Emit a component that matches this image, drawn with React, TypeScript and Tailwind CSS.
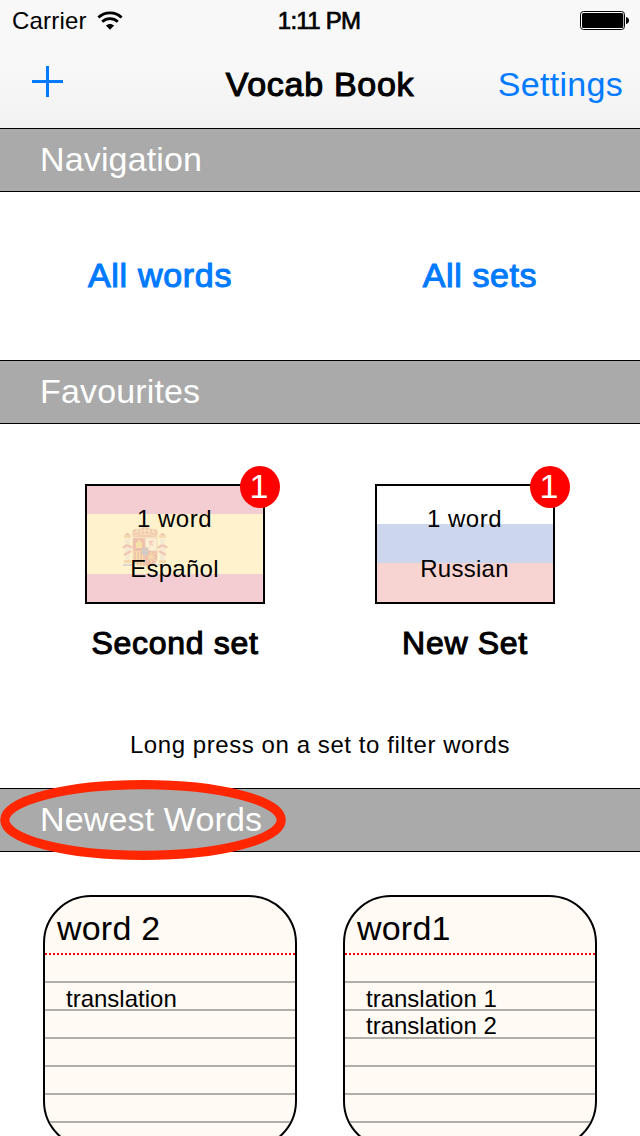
import type { ReactNode } from "react";

function WifiIcon() {
  return (
    <svg width="26" height="20" viewBox="0 0 26 20" fill="none" stroke="black">
      <path d="M1.4 6.5C7.8 0.3 18.2 0.3 24.6 6.5" strokeWidth="2.9" />
      <path d="M5.2 10.7C9.6 6.6 16.4 6.6 20.8 10.7" strokeWidth="2.9" />
      <path d="M8.9 14.6C11.2 12.3 14.8 12.3 17.1 14.6L13 18.8Z" fill="black" stroke="none" />
    </svg>
  );
}

function BatteryIcon() {
  return (
    <svg width="49" height="19" viewBox="0 0 49 19">
      <rect x="0.5" y="0.5" width="44" height="18" rx="3" fill="#fff" stroke="#000" />
      <rect x="2" y="2" width="41.3" height="15" rx="1.6" fill="#000" />
      <path d="M46 6C48 6.5 49 7.7 49 9.5C49 11.3 48 12.5 46 13Z" fill="#000" />
    </svg>
  );
}

function CoatOfArms() {
  return (
    <svg width="46" height="42" viewBox="0 0 46 42" className="opacity-20">
      <path d="M11 11L10 5Q13 2 18 3Q22 0 23 1Q24 0 28 3Q33 2 36 5L35 11Z" fill="#c03040" />
      <path d="M11 7Q23 2 35 7M12 10Q23 7 34 10" stroke="#d8a060" strokeWidth="1.2" fill="none" />
      <path d="M15 3V7M19 3V8M23 0V8M27 3V8M31 3V7" stroke="#e8c8a0" strokeWidth="1" fill="none" />
      <path d="M11 12H23V25H11Z" fill="#b40030" />
      <path d="M23 12H35V25H23Z" fill="#f2e6f2" />
      <path d="M11 25H23V40Q11 40 11 32Z" fill="#dba020" />
      <path d="M23 25H35V32Q35 40 23 40Z" fill="#b40030" />
      <path d="M13 26V36M16 26V38M19 26V39M22 26V39" stroke="#b40030" strokeWidth="1.6" />
      <path d="M14 22V16H16V14H18V16H20V22Z" fill="#c9a520" />
      <path d="M26 16L29 14L32 15L30 17L32 20L29 19L27 23L28 18Z" fill="#d04a80" />
      <path d="M25 27L33 35M33 27L25 35M25 31H33M29 26V37" stroke="#d0a526" strokeWidth="1" />
      <ellipse cx="23" cy="25.5" rx="3.5" ry="4.2" fill="#0040d0" stroke="#b40030" />
      <path d="M11 12H35V32Q35 40 23 40Q11 40 11 32ZM23 12V40M11 25H35" stroke="#904060" strokeWidth="0.7" fill="none" />
      <path d="M3 13H8V34H3ZM38 13H43V34H38Z" fill="#d0cce8" />
      <path d="M2 9H9V12H2ZM37 9H44V12H37ZM2 34H9V37H2ZM37 34H44V37H37Z" fill="#c87840" />
      <path d="M3 9Q5.5 5 8 9ZM38 9Q40.5 5 43 9Z" fill="#b40030" />
      <path d="M1 39H10M36 39H45" stroke="#5070d0" strokeWidth="2" />
      <path d="M1 22Q5 17 10 22M2 29L9 25M45 22Q41 17 36 22M44 29L37 25" stroke="#c02050" strokeWidth="2.4" fill="none" />
    </svg>
  );
}

function SectionBar({ children }: { children: ReactNode }) {
  return (
    <h2 className="relative h-16 border-y border-black bg-[#aaaaaa] pl-10 text-[34px] leading-[61px] tracking-[0.15px] text-white">
      {children}
    </h2>
  );
}

type SetTileProps = { flag: ReactNode; language: string; name: string };

function SetTile({ flag, language, name }: SetTileProps) {
  return (
    <div className="flex w-[180px] flex-col items-center">
      <div className="relative h-[120px] w-full border-2 border-black">
        {flag}
        <div className="absolute inset-0 flex flex-col items-center pt-[8px] pr-[1px] text-[24px] leading-[50px]">
          <span className="tracking-[0.5px]">1 word</span>
          <span className="tracking-[0.25px]">{language}</span>
        </div>
        <span className="absolute -top-[20px] -right-[17px] h-[42px] w-[40px] rounded-[50%] bg-[#ff0000] pr-[2px] text-center text-[34px] leading-[41px] text-white">
          1
        </span>
      </div>
      <h3 className={"mt-[16px] text-[32px] leading-[46px] tracking-[0.7px] " + medium}>{name}</h3>
    </div>
  );
}

function WordCard({ word, translations }: { word: string; translations: string[] }) {
  return (
    <article className="relative h-[254px] w-[254px] shrink-0 overflow-hidden rounded-[48px] border-2 border-black bg-[#fffaf4]">
      <h3 className="h-[56px] pl-[12px] text-[34px] leading-[62px] tracking-[0.2px]">{word}</h3>
      <div className="h-[2px] bg-[repeating-linear-gradient(90deg,#ff0000_0_2px,transparent_2px_4px)]" />
      <div className="h-[196px] bg-[repeating-linear-gradient(180deg,transparent_0_26px,#b2aeaa_26px_28px)] pt-[30px] pl-[21px] text-[24px] leading-[27px]">
        {translations.map((t) => (
          <p key={t}>{t}</p>
        ))}
      </div>
    </article>
  );
}

const medium = "[-webkit-text-stroke:1.1px_currentColor]";

export default function App() {
  return (
    <main className="h-[1136px] w-[640px] overflow-hidden bg-white font-['Liberation_Sans',Arial,sans-serif] whitespace-nowrap text-black">
      <header className="h-32 bg-linear-to-b from-[#f8f8f8] from-50% to-[#f2f2f2]">
        <div className="grid h-10 grid-cols-3 items-center pr-[11px] pl-[11px] text-[24px] leading-[41px]">
          <div className="flex items-center gap-[10px] pl-[1px]">
            <span className="tracking-[0.2px]">Carrier</span>
            <WifiIcon />
          </div>
          <span className="pr-[2px] text-center tracking-[-0.75px] [-webkit-text-stroke:0.7px_currentColor]">1:11 PM</span>
          <div className="flex justify-end">
            <BatteryIcon />
          </div>
        </div>
        <div className="grid h-[88px] grid-cols-3 px-[17px] text-[34px] leading-[88px]">
          <svg width="31" height="31" viewBox="0 0 31 31" className="mt-[26px] ml-[15px]">
            <path d="M14 0h3v14h14v3H17v14h-3V17H0v-3h14z" fill="#007aff" />
          </svg>
          <h1 className={"text-center tracking-[0.7px] " + medium}>Vocab Book</h1>
          <span className="text-right tracking-[0.3px] text-[#007aff]">Settings</span>
        </div>
      </header>

      <SectionBar>Navigation</SectionBar>
      <nav className="grid h-[168px] grid-cols-2 text-center text-[34px] leading-[166px] text-[#007aff]">
        <a className={"tracking-[0.7px] " + medium}>All words</a>
        <a className={"tracking-[0.6px] " + medium}>All sets</a>
      </nav>

      <SectionBar>Favourites</SectionBar>
      <section className="h-[364px] pt-[60px]">
        <div className="flex justify-between px-[85px]">
          <SetTile
            language="Español"
            flag={
              <div className="flex h-full flex-col">
                <div className="h-[28px] bg-[#f4cdd3]" />
                <div className="h-[60px] bg-[#fff2cc] pt-[12px] pl-[35px]">
                  <CoatOfArms />
                </div>
                <div className="flex-1 bg-[#f4cdd3]" />
              </div>
            }
            name="Second set"
          />
          <SetTile
            language="Russian"
            flag={
              <div className="flex h-full flex-col">
                <div className="h-[38px]" />
                <div className="h-[39px] bg-[#ccd6ed]" />
                <div className="flex-1 bg-[#f7d3d1]" />
              </div>
            }
            name="New Set"
          />
        </div>
        <p className="mt-[64px] text-center text-[24px] leading-[30px] tracking-[0.57px]">
          Long press on a set to filter words
        </p>
      </section>

      <div className="relative">
        <SectionBar>Newest Words</SectionBar>
        <svg width="288" height="82" viewBox="0 0 288 82" className="absolute -top-[9px] left-0">
          <ellipse cx="143" cy="41" rx="138.2" ry="35.3" fill="none" stroke="#ff2600" strokeWidth="9.2" />
        </svg>
      </div>
      <section className="flex gap-[46px] pt-[43px] pl-[43px]">
        <WordCard word="word 2" translations={["translation"]} />
        <WordCard word="word1" translations={["translation 1", "translation 2"]} />
      </section>
    </main>
  );
}
